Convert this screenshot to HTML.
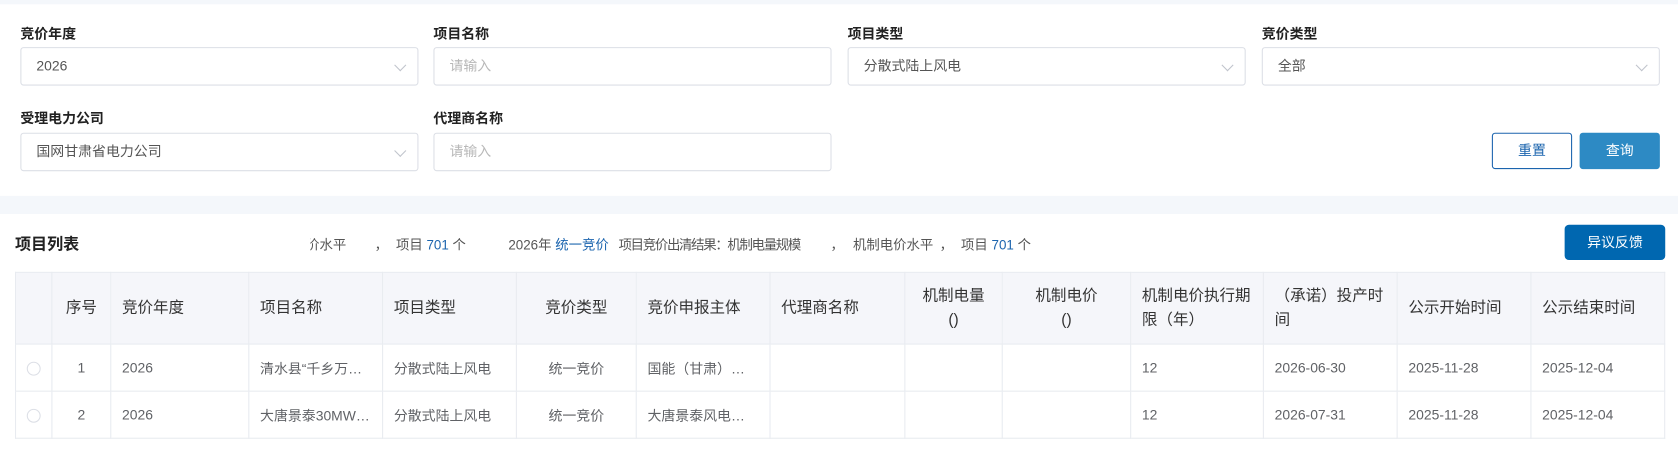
<!DOCTYPE html><html><head><meta charset="utf-8"><style>
*{box-sizing:border-box;margin:0;padding:0}
body{width:1678px;height:458px;background:#f4f7fb;font-family:"Liberation Sans","Noto Sans CJK SC",sans-serif;overflow:hidden;color:#333}
#w{position:relative;width:1568px;height:428px;transform:scale(1.0702);transform-origin:0 0}
.a{position:absolute}
.panel{background:#fff;left:0;width:1568px}
.lbl{font-size:13px;font-weight:bold;color:#222}
.inp{height:36px;border:1px solid #dcdfe6;border-radius:3px;font-size:13px;color:#555;padding:0 14px;line-height:34px;background:#fff}
.inp.ph{color:#b8b8b8}
.chev{position:absolute;right:12px;top:12px;width:8px;height:8px;border-right:1px solid #c0c4cc;border-bottom:1px solid #c0c4cc;transform:rotate(45deg)}
.btn{height:34px;border-radius:3px;font-size:13px;text-align:center;line-height:32px}
table{border-collapse:collapse;table-layout:fixed;position:absolute;left:14px;top:254px;width:1541px}
td,th{border:1px solid #e8ebf0;font-weight:normal;padding:0 10px;text-align:left;white-space:nowrap;overflow:hidden}
th{background:#f5f6fa;height:67px;font-size:14.5px;color:#333;line-height:22px;white-space:normal}
td{height:44px;font-size:13px;color:#606266}
.c{text-align:center}
.radio{display:inline-block;width:13px;height:13px;border:1px solid #dcdfe6;border-radius:50%;vertical-align:middle}
.blue{color:#1b64ae}
.s{position:absolute;top:218px;font-size:12.5px;color:#555;white-space:nowrap}
</style></head><body><div id="w">
<div class="a panel" style="top:4px;height:179px"></div>
<div class="a panel" style="top:200px;height:228px"></div>

<div class="a lbl" style="left:19px;top:21px">竞价年度</div>
<div class="a lbl" style="left:405px;top:21px">项目名称</div>
<div class="a lbl" style="left:792px;top:21px">项目类型</div>
<div class="a lbl" style="left:1179px;top:21px">竞价类型</div>
<div class="a inp" style="left:19px;top:44px;width:372px">2026<span class="chev"></span></div>
<div class="a inp ph" style="left:405px;top:44px;width:372px">请输入</div>
<div class="a inp" style="left:792px;top:44px;width:372px">分散式陆上风电<span class="chev"></span></div>
<div class="a inp" style="left:1179px;top:44px;width:372px">全部<span class="chev"></span></div>

<div class="a lbl" style="left:19px;top:100px">受理电力公司</div>
<div class="a lbl" style="left:405px;top:100px">代理商名称</div>
<div class="a inp" style="left:19px;top:124px;width:372px">国网甘肃省电力公司<span class="chev"></span></div>
<div class="a inp ph" style="left:405px;top:124px;width:372px">请输入</div>
<div class="a btn" style="left:1394px;top:124px;width:75px;border:1px solid #1b64ae;color:#1b64ae;background:#fff">重置</div>
<div class="a btn" style="left:1476px;top:124px;width:75px;background:#2d8ac4;color:#fff;border:1px solid #2d8ac4">查询</div>

<div class="a" style="left:14px;top:217px;font-size:15px;font-weight:bold;color:#222">项目列表</div>
<div class="s" style="left:290px;width:56px;overflow:hidden"><span style="margin-left:-4px">价水平</span></div>
<div class="s" style="left:350px">，</div>
<div class="s" style="left:370px">项目 <span class="blue">701</span> 个</div>
<div class="s" style="left:475px">2026年 <span class="blue">统一竞价</span></div>
<div class="s" style="left:578px;letter-spacing:-1.2px">项目竞价出清结果：机制电量规模</div>
<div class="s" style="left:776px">，</div>
<div class="s" style="left:797px">机制电价水平</div>
<div class="s" style="left:878px">，</div>
<div class="s" style="left:898px">项目 <span class="blue">701</span> 个</div>
<div class="a btn" style="left:1462px;top:210px;width:94px;height:33px;background:#0067b0;color:#fff;line-height:33px;border-radius:4px">异议反馈</div>

<table>
<colgroup><col style="width:34px"><col style="width:55px"><col style="width:129px"><col style="width:125px"><col style="width:125px"><col style="width:112px"><col style="width:125px"><col style="width:126px"><col style="width:91px"><col style="width:120px"><col style="width:124px"><col style="width:125px"><col style="width:125px"><col style="width:125px"></colgroup>
<tr><th></th><th class="c">序号</th><th>竞价年度</th><th>项目名称</th><th>项目类型</th><th class="c">竞价类型</th><th>竞价申报主体</th><th>代理商名称</th><th class="c">机制电量<br>()</th><th class="c">机制电价<br>()</th><th>机制电价执行期限（年）</th><th>（承诺）投产时间</th><th>公示开始时间</th><th>公示结束时间</th></tr>
<tr><td class="c"><span class="radio"></span></td><td class="c">1</td><td>2026</td><td>清水县“千乡万…</td><td>分散式陆上风电</td><td class="c">统一竞价</td><td>国能（甘肃）…</td><td></td><td></td><td></td><td>12</td><td>2026-06-30</td><td>2025-11-28</td><td>2025-12-04</td></tr>
<tr><td class="c"><span class="radio"></span></td><td class="c">2</td><td>2026</td><td>大唐景泰30MW…</td><td>分散式陆上风电</td><td class="c">统一竞价</td><td>大唐景泰风电…</td><td></td><td></td><td></td><td>12</td><td>2026-07-31</td><td>2025-11-28</td><td>2025-12-04</td></tr>
</table>
</div></body></html>
